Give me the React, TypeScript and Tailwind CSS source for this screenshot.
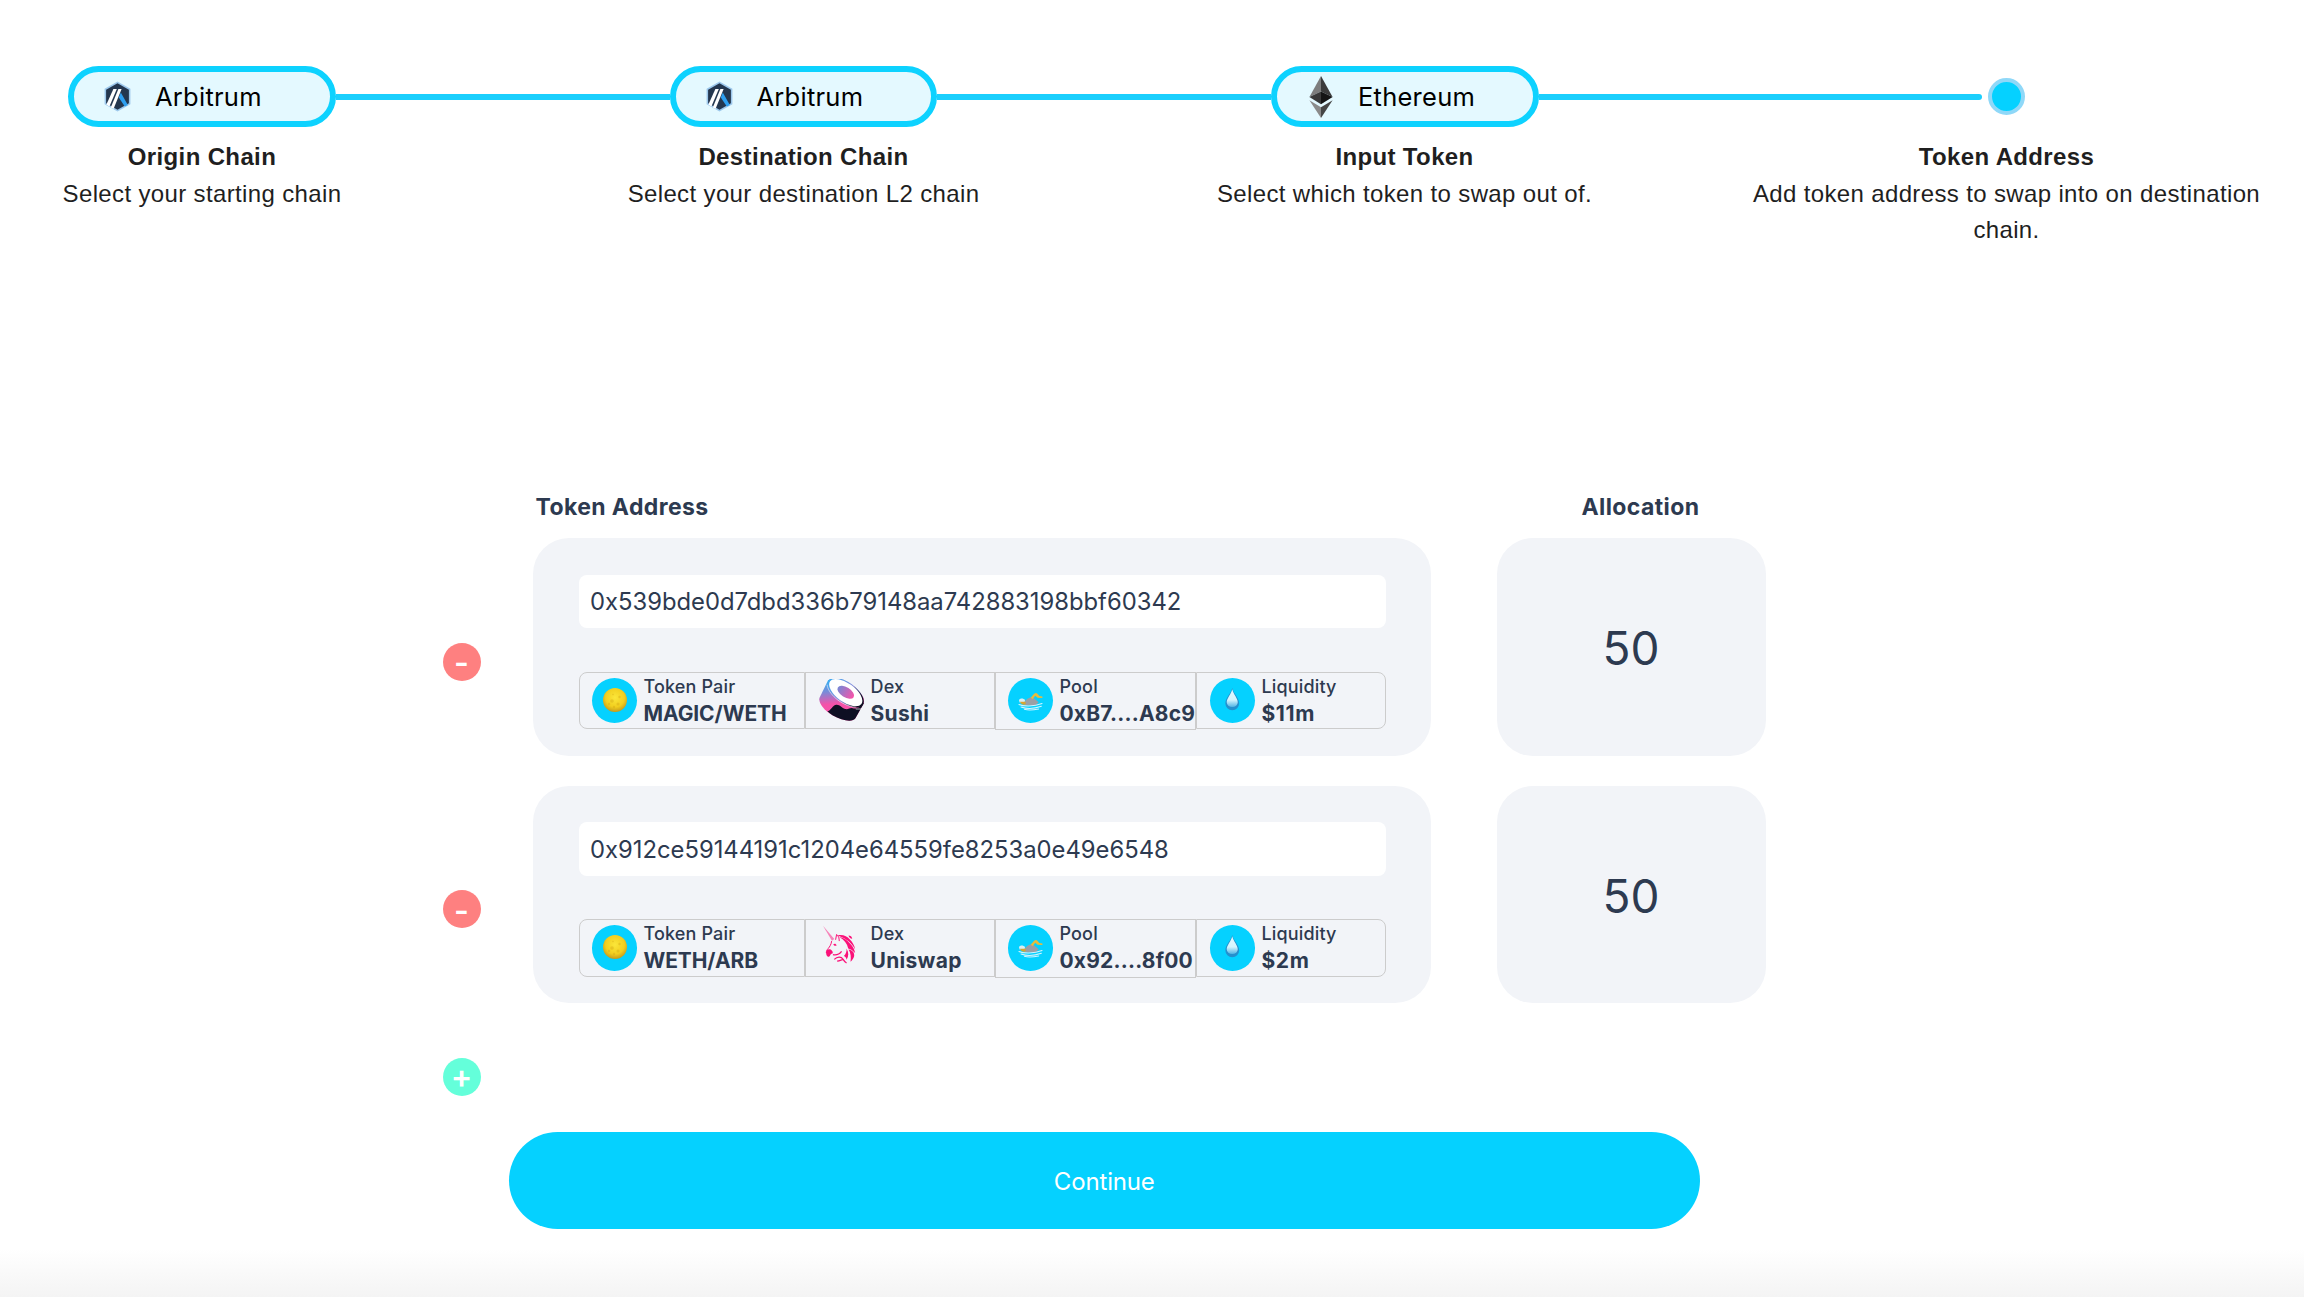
import { ReactNode } from "react";
import clsx from "clsx";

function ArbitrumIcon() {
  return (
    <svg viewBox="0 0 27 31" className="h-[31px] w-[27px]">
      <path d="M13.5 0.4 26.4 7.8v15.4L13.5 30.6 0.6 23.2V7.8z" fill="#9dc8ec" />
      <path d="M13.5 2.2 24.9 8.8v13.4L13.5 28.8 2.1 22.2V8.8z" fill="#24374f" />
      <path d="M16.8 11.6 23.8 24 20.8 25.6 14.8 16.6z" fill="#2d9ff0" />
      <path d="M9.4 8h3.4L5.4 25.6 2.4 23.6z" fill="#fff" />
      <path d="M14.4 8h3.2L9.6 27.8 6.8 26.4z" fill="#fff" />
    </svg>
  );
}

function EthereumIcon() {
  return (
    <svg viewBox="0 0 24 42" className="h-[42px] w-[24px]">
      <path d="M12 0 0.4 21 12 15.6z" fill="#7d7d7d" />
      <path d="M12 0 23.6 21 12 15.6z" fill="#3b3b3b" />
      <path d="M12 15.6 0.4 21 12 28.2z" fill="#393939" />
      <path d="M12 15.6 23.6 21 12 28.2z" fill="#141414" />
      <path d="M0.4 24.2 12 31.2V42z" fill="#8a8a8a" />
      <path d="M23.6 24.2 12 31.2V42z" fill="#454545" />
    </svg>
  );
}

function MoonIcon() {
  return (
    <svg viewBox="0 0 24 24" className="mb-[1px] size-[24px]">
      <defs>
        <radialGradient id="moon" cx="0.5" cy="0.4" r="0.6">
          <stop offset="0" stopColor="#fbe63a" />
          <stop offset="0.65" stopColor="#f2cf1f" />
          <stop offset="1" stopColor="#c49a1b" />
        </radialGradient>
      </defs>
      <circle cx="12" cy="12" r="12" fill="url(#moon)" />
      <g fill="#d3a716" opacity="0.4">
        <circle cx="9" cy="13" r="1.8" />
        <circle cx="15" cy="16" r="1.5" />
        <circle cx="16.5" cy="9" r="1.2" />
        <circle cx="6" cy="16" r="1.2" />
        <circle cx="11" cy="19" r="1.2" />
        <circle cx="10" cy="6.5" r="0.8" />
      </g>
    </svg>
  );
}

function SwimmerIcon() {
  return (
    <svg viewBox="0 0 72 56" className="mt-[2px] h-[19px] w-[25px]">
      <path d="M14 34C22 22 32 15 42 15l18 15-8 8-30 2z" fill="#9b9fa6" />
      <path
        d="M37 16 46 6c4-4 8-4 11 0l5 6 9 1v5l-14-1-7-6-8 10z"
        fill="#e8bb3c"
      />
      <path d="M2 24c3-6 13-6 18 0l-2 7H4z" fill="#d9eef5" />
      <path d="M5 29h15c3 3 2 6 0 8-6 1-13-1-15-8z" fill="#d9a530" />
      <g fill="none" stroke="#d3f4ff" strokeWidth="3" strokeLinecap="round">
        <path d="M2 37c12 6 44 7 68-3" />
        <path d="M8 44c16 6 40 5 60-2" />
        <path d="M18 51c12 3 26 2 42-1" />
      </g>
    </svg>
  );
}

function DropIcon() {
  return (
    <svg viewBox="0 0 42 66" className="mb-[2px] h-[23px] w-[14.5px]">
      <defs>
        <linearGradient id="drop" x1="0" y1="0" x2="0" y2="1">
          <stop offset="0" stopColor="#e4f8ff" />
          <stop offset="0.6" stopColor="#d4f5fe" />
          <stop offset="1" stopColor="#4fb4e4" />
        </linearGradient>
      </defs>
      <path
        d="M21 0c3 16 20 28 20 44a20 20 0 0 1-40 0C1 28 18 16 21 0z"
        fill="#2590cd"
      />
      <path
        d="M21 3c3 14 16 26 16 38a16 14 0 0 1-32 0C5 29 18 17 21 3z"
        fill="url(#drop)"
      />
    </svg>
  );
}

function SushiIcon() {
  return (
    <svg viewBox="0 0 136 126" className="h-[42px] w-[45.5px]">
      <defs>
        <linearGradient id="sushi" x1="0.2" y1="0" x2="0.3" y2="1">
          <stop offset="0" stopColor="#2fb4f2" />
          <stop offset="0.3" stopColor="#7a8bd8" />
          <stop offset="0.6" stopColor="#f452a9" />
          <stop offset="1" stopColor="#fb53a8" />
        </linearGradient>
        <linearGradient id="rim" x1="0" y1="0" x2="1" y2="0">
          <stop offset="0" stopColor="#3fa9f0" />
          <stop offset="0.55" stopColor="#8a8fdc" />
          <stop offset="0.85" stopColor="#0e0f23" />
        </linearGradient>
        <linearGradient id="roe" x1="0" y1="0" x2="1" y2="0">
          <stop offset="0" stopColor="#7687d6" />
          <stop offset="1" stopColor="#fa52a7" />
        </linearGradient>
      </defs>
      <path
        d="M27 4C42-4 82 4 110 27c18 15 27 32 26 43l-27 48c-8 12-39 8-69-9C12 92-2 71 1 57z"
        fill="url(#sushi)"
      />
      <path
        d="M136 70l-27 48c-8 12-39 8-69-9-6-4-11-8-15-12 10-2 16-19 27-20 10-1 16 9 26 13 10 2 12-3 20-3 8 1 8 3 14 1 10-3 16-11 24-18z"
        fill="#0e0f23"
      />
      <ellipse
        cx="80"
        cy="41"
        rx="63"
        ry="31"
        transform="rotate(36 80 41)"
        fill="url(#rim)"
      />
      <ellipse
        cx="80"
        cy="41"
        rx="58"
        ry="28"
        transform="rotate(36 80 41)"
        fill="#fff"
      />
      <ellipse
        cx="80"
        cy="40"
        rx="28"
        ry="15"
        transform="rotate(32 80 40)"
        fill="url(#roe)"
      />
      <path
        d="M24 17C26 42 64 80 110 85"
        fill="none"
        stroke="#fff"
        strokeWidth="2"
        opacity=".8"
      />
      <path d="M110 90h16" stroke="#fff" strokeWidth="2" />
    </svg>
  );
}

function UniswapIcon() {
  return (
    <svg
      viewBox="66 48 104 118"
      className="mr-[4px] mb-[6px] h-[39.5px] w-[34.5px]"
      fill="#fb1179"
    >
      <path d="M69 50 103 90 96 95z" opacity="0.5" />
      <path
        d="M95 96c-1 10-6 17-10 22-4 4-6 8-6 14M107 92l3-16c6 5 8 11 8 20"
        fill="none"
        stroke="#fb1179"
        strokeWidth="3"
      />
      <path d="M80 124c5-5 12-4 16 1 4 4 3 9-1 9-4-1-3 7-8 9-6 1-11-9-7-19z" />
      <path d="M100 106c4-3 8-2 10 3-4 2-8 1-10-3z" />
      <path d="M118 84c14 2 24 10 33 20 8 8 13 17 15 28-7-8-13-12-21-14-3-14-12-26-27-34z" />
      <path d="M113 79c15-4 28 2 37 12 8 8 14 18 16 30-9-18-26-33-53-42z" />
      <path d="M146 79c6 0 10 3 11 10-6-1-10-4-11-10z" />
      <path d="M146 121c12 2 18 9 17 20-2 7-5 12-11 17 2-14 1-26-6-37z" />
      <path d="M140 118c7 12 7 23 0 34-1-6-4-9-8-11 6-7 9-14 8-23z" />
      <path
        d="M99 137c9 2 20-2 26-10M103 151c9-9 21-9 26-1 3 5 5 9 11 12M112 156c7 1 10-4 17-4"
        fill="none"
        stroke="#fb1179"
        strokeWidth="4"
      />
    </svg>
  );
}

function Bubble({ children }: { children: ReactNode }) {
  return (
    <div className="flex size-[45.5px] shrink-0 items-center justify-center rounded-full bg-[#05d1ff]">
      {children}
    </div>
  );
}

function StepPill({ icon, name }: { icon: ReactNode; name: string }) {
  return (
    <div className="flex h-[61px] w-[267.5px] shrink-0 items-center rounded-full border-[6px] border-[#0dd2ff] bg-[#e4f9ff] pl-[30px]">
      <div className="flex w-[27px] shrink-0 justify-center">{icon}</div>
      <span className="mt-[2px] ml-[24px] text-[25.5px] tracking-[0.25px] text-black">
        {name}
      </span>
    </div>
  );
}

function StepLabel({
  title,
  text,
  className,
}: {
  title: string;
  text: string;
  className?: string;
}) {
  return (
    <div
      className={clsx(
        "shrink-0 text-center font-['Liberation_Sans',sans-serif] text-[24px] leading-[36.5px] tracking-[0.36px] text-[#1f1f1f]",
        className
      )}
    >
      <h3 className="font-bold">{title}</h3>
      <p>{text}</p>
    </div>
  );
}

type StatProps = {
  icon: ReactNode;
  label: string;
  value: string;
  className?: string;
};

function Stat({ icon, label, value, className }: StatProps) {
  return (
    <div
      className={clsx("flex shrink-0 border border-[#cccccc]", className)}
    >
      <div className="flex h-[55.5px] w-[46px] shrink-0 items-center justify-center">
        {icon}
      </div>
      <div className="mt-[1px] ml-[6px] whitespace-nowrap">
        <p className="text-[18px] leading-[26px] font-medium tracking-[0.15px]">
          {label}
        </p>
        <p className="text-[21px] leading-[28px] font-bold">{value}</p>
      </div>
    </div>
  );
}

type Token = {
  address: string;
  pair: string;
  dex: string;
  dexIcon: ReactNode;
  pool: string;
  liquidity: string;
  allocation: number;
};

const tokens: Token[] = [
  {
    address: "0x539bde0d7dbd336b79148aa742883198bbf60342",
    pair: "MAGIC/WETH",
    dex: "Sushi",
    dexIcon: <SushiIcon />,
    pool: "0xB7....A8c9",
    liquidity: "$11m",
    allocation: 50,
  },
  {
    address: "0x912ce59144191c1204e64559fe8253a0e49e6548",
    pair: "WETH/ARB",
    dex: "Uniswap",
    dexIcon: <UniswapIcon />,
    pool: "0x92....8f00",
    liquidity: "$2m",
    allocation: 50,
  },
];

function TokenRow({ token }: { token: Token }) {
  return (
    <div className="flex h-[217.5px]">
      <button className="mt-[104.5px] flex size-[38px] shrink-0 items-center justify-center rounded-full bg-[#fe8080] pt-[3px] text-[32px] leading-none font-semibold text-white">
        -
      </button>
      <div className="ml-[52.5px] w-[897.5px] shrink-0 rounded-[36px] bg-[#f2f4f8] px-[45px] pt-[36.5px]">
        <div className="ml-[0.5px] flex h-[53.5px] items-center rounded-lg bg-white pt-[2px] pl-[11.5px] text-[23.8px]">
          {token.address}
        </div>
        <div className="mt-[43.5px] ml-[0.5px] flex items-start">
          <Stat
            icon={
              <Bubble>
                <MoonIcon />
              </Bubble>
            }
            label="Token Pair"
            value={token.pair}
            className="h-[57.5px] w-[226.5px] rounded-l-lg pl-[12px] tracking-[-0.1px]"
          />
          <Stat
            icon={token.dexIcon}
            label="Dex"
            value={token.dex}
            className="h-[57.5px] w-[190px] pl-[12.5px] tracking-[0.3px]"
          />
          <Stat
            icon={
              <Bubble>
                <SwimmerIcon />
              </Bubble>
            }
            label="Pool"
            value={token.pool}
            className="h-[58.5px] w-[200.5px] pl-[11.5px] tracking-[0.2px]"
          />
          <Stat
            icon={
              <Bubble>
                <DropIcon />
              </Bubble>
            }
            label="Liquidity"
            value={token.liquidity}
            className="h-[57.5px] w-[190px] rounded-r-lg pl-[13px] tracking-[0.6px]"
          />
        </div>
      </div>
      <div className="ml-[66px] flex w-[269px] shrink-0 items-center justify-center rounded-[36px] bg-[#f2f4f8] pt-[4px] text-[46px]">
        {token.allocation}
      </div>
    </div>
  );
}

export default function App() {
  return (
    <div className="flex h-[1297px] w-[2304px] flex-col overflow-hidden bg-white font-[Inter,sans-serif] text-[#2d3a50]">
      {/* stepper */}
      <div className="flex items-center pt-[66px] pl-[68px]">
        <StepPill icon={<ArbitrumIcon />} name="Arbitrum" />
        <div className="h-[6px] w-[334px] bg-[#1bcffd]" />
        <StepPill icon={<ArbitrumIcon />} name="Arbitrum" />
        <div className="h-[6px] w-[334px] bg-[#1bcffd]" />
        <StepPill icon={<EthereumIcon />} name="Ethereum" />
        <div className="h-[6px] w-[443px] rounded-r-full bg-[#1bcffd]" />
        <div className="ml-[6px] size-[37px] rounded-full border-[4px] border-[#8fd8f8] bg-[#05d1ff]" />
      </div>
      <div className="mt-[12px] flex">
        <StepLabel
          title="Origin Chain"
          text="Select your starting chain"
          className="w-[404px]"
        />
        <StepLabel
          title="Destination Chain"
          text="Select your destination L2 chain"
          className="w-[799px]"
        />
        <StepLabel
          title="Input Token"
          text="Select which token to swap out of."
          className="w-[403px]"
        />
        <StepLabel
          title="Token Address"
          text="Add token address to swap into on destination chain."
          className="ml-[130.5px] w-[540px]"
        />
      </div>

      {/* tokens */}
      <div className="mt-[240.5px] ml-[442.5px]">
        <div className="flex text-[23px] leading-[36px] font-bold tracking-[0.4px]">
          <h2 className="ml-[93px] w-[1046px]">Token Address</h2>
          <h2>Allocation</h2>
        </div>
        <div className="mt-[13px] flex flex-col gap-[30px]">
          {tokens.map((token) => (
            <TokenRow key={token.address} token={token} />
          ))}
        </div>
        <button className="mt-[54.5px] flex size-[38px] items-center justify-center rounded-full bg-[#64ffda] pt-[1px] text-[32px] leading-none font-semibold text-white">
          +
        </button>
      </div>

      <button className="mt-[36px] ml-[509px] h-[97.5px] w-[1190.5px] shrink-0 rounded-full bg-[#05d1ff] pt-[3px] text-[24px] tracking-[-0.15px] text-white">
        Continue
      </button>
      <div className="mt-auto h-[48px] bg-linear-to-b from-white to-[#f4f4f4]" />
    </div>
  );
}
